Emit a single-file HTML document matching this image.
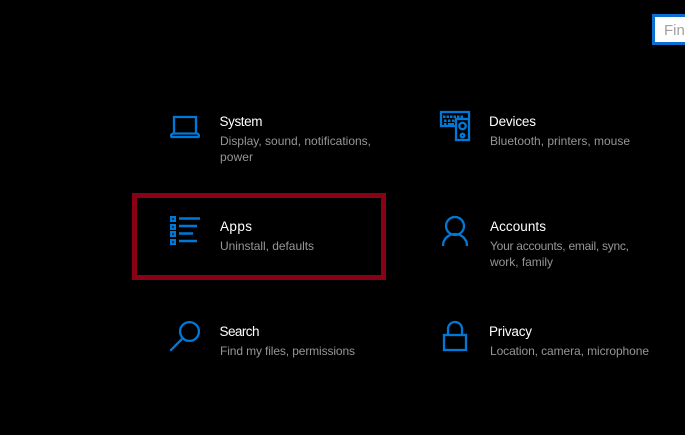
<!DOCTYPE html>
<html><head><meta charset="utf-8"><style>
html,body{margin:0;padding:0;background:#000;width:685px;height:435px;overflow:hidden}
svg{display:block;position:absolute;left:0;top:0}
text{font-family:"Liberation Sans",sans-serif}
.t{font-size:13.5px;fill:#fff}
.s{font-size:12px;fill:#969696}
.i{fill:none;stroke:#0078d7;stroke-width:2.3}
</style></head><body>
<svg width="685" height="435" viewBox="0 0 685 435" xmlns="http://www.w3.org/2000/svg">
<rect width="685" height="435" fill="#000"/>
<!-- search box -->
<rect x="653.500" y="15.500" width="40" height="28" fill="#fff" stroke="#0a6fd0" stroke-width="3"/>
<text x="664" y="35" font-size="15" fill="#a0a0a0">Find</text>
<!-- highlight -->
<rect x="134.500" y="195.500" width="249" height="82" fill="none" stroke="#8a0015" stroke-width="5"/>
<!-- laptop -->
<path class="i" d="M174 133V117H196V133M171.500 137C170.500 135.500 171.500 133.500 173.500 133.500H196.500C198.500 133.500 199.500 135.500 198.500 137Z"/>
<!-- devices -->
<path class="i" d="M455 126H441V112H469V118"/>
<path d="M443 115.500h2.500v2.500h-2.500zM446.500 115.500h2.500v2.500h-2.500zM450 115.500h2.500v2.500h-2.500zM453.500 115.500h2.500v2.500h-2.500zM457 115.500h2.500v2.500h-2.500zM460.500 115.500h2.500v2.500h-2.500zM444 119.500h2.500v2.500h-2.500zM448 119.500h2.500v2.500h-2.500zM452 119.500h2.500v2.500h-2.500zM444 123h2.500v2h-2.500zM448 123h6v2h-6z" fill="#0078d7"/>
<rect class="i" x="456" y="119" width="13" height="21" fill="#000"/>
<circle class="i" cx="462.500" cy="126" r="3.200" stroke-width="2"/>
<circle class="i" cx="462.500" cy="135.500" r="1.800" stroke-width="1.800"/>
<!-- apps -->
<g fill="#0078d7">
<rect x="170" y="216" width="6" height="6"/><rect x="170" y="224" width="6" height="6"/><rect x="170" y="231" width="6" height="6"/><rect x="170" y="239" width="6" height="6"/>
</g>
<g fill="#00345f">
<rect x="172" y="218" width="2" height="2"/><rect x="172" y="226" width="2" height="2"/><rect x="172" y="233" width="2" height="2"/><rect x="172" y="241" width="2" height="2"/>
</g>
<path d="M179 218.500H200M179 226H197M179 233.500H193M179 241H197" fill="none" stroke="#0078d7" stroke-width="2.400"/>
<!-- accounts -->
<circle class="i" cx="455" cy="226" r="9"/>
<path class="i" d="M443 246C443 239 448.500 234 455 234S467 239 467 246"/>
<!-- search -->
<circle class="i" cx="189.500" cy="331.500" r="9.400"/>
<path class="i" d="M182.800 338.200L171 350" stroke-linecap="round"/>
<!-- privacy -->
<rect class="i" x="444" y="335" width="22" height="15"/>
<path class="i" d="M448 335V329A7 7 0 0 1 462 329V335"/>
<!-- text -->
<text class="t" x="219.500" y="126" textLength="43" lengthAdjust="spacing">System</text>
<text class="s" x="220" y="145" textLength="151" lengthAdjust="spacing">Display, sound, notifications,</text>
<text class="s" x="220" y="161" textLength="33" lengthAdjust="spacing">power</text>
<text class="t" x="489" y="126" textLength="47" lengthAdjust="spacing">Devices</text>
<text class="s" x="490" y="145" textLength="140" lengthAdjust="spacing">Bluetooth, printers, mouse</text>
<text class="t" x="220" y="231" textLength="32" lengthAdjust="spacing">Apps</text>
<text class="s" x="220" y="250" textLength="94" lengthAdjust="spacing">Uninstall, defaults</text>
<text class="t" x="490" y="231" textLength="56" lengthAdjust="spacing">Accounts</text>
<text class="s" x="490" y="250" textLength="139" lengthAdjust="spacing">Your accounts, email, sync,</text>
<text class="s" x="490" y="266" textLength="63" lengthAdjust="spacing">work, family</text>
<text class="t" x="219.500" y="336" textLength="40" lengthAdjust="spacing">Search</text>
<text class="s" x="220" y="355" textLength="135" lengthAdjust="spacing">Find my files, permissions</text>
<text class="t" x="489" y="336" textLength="43" lengthAdjust="spacing">Privacy</text>
<text class="s" x="490" y="355" textLength="159" lengthAdjust="spacing">Location, camera, microphone</text>
</svg>
</body></html>
